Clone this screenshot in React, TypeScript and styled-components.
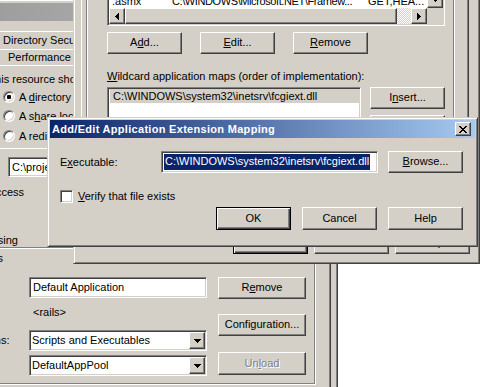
import React from "react";
import styled, { createGlobalStyle, css } from "styled-components";

const FACE = "#d4d0c8";
const SHADOW = "#808080";
const DARK = "#404040";
const SELECT = "#0a246a";

const GlobalStyle = createGlobalStyle`
  html, body { margin: 0; padding: 0; background: #ffffff; overflow: hidden; }
  body {
    font-family: "Liberation Sans", Arial, "DejaVu Sans", sans-serif;
    font-size: 11px;
    line-height: 13px;
    color: #000;
  }
  *, *::before, *::after { box-sizing: border-box; }
`;

const raisedEdge = css`
  border: 1px solid;
  border-color: #fff ${DARK} ${DARK} #fff;
  box-shadow: inset -1px -1px 0 ${SHADOW};
`;

const sunkenEdge = css`
  border: 1px solid;
  border-color: ${SHADOW} #fff #fff ${SHADOW};
  box-shadow: inset 1px 1px 0 ${DARK}, inset -1px -1px 0 ${FACE};
`;

const Desktop = styled.div`
  position: relative;
  width: 480px;
  height: 387px;
  overflow: hidden;
  background: #fff;
`;

const Window = styled.div<{ $x: number; $y: number; $w: number; $h: number; $frame: number }>`
  position: absolute;
  left: ${(p) => p.$x}px;
  top: ${(p) => p.$y}px;
  width: ${(p) => p.$w}px;
  height: ${(p) => p.$h}px;
  background: ${FACE};
  border: 1px solid;
  border-color: ${FACE} ${DARK} ${DARK} ${FACE};
  box-shadow: inset 1px 1px 0 #fff, inset -1px -1px 0 ${SHADOW};
  padding: ${(p) => p.$frame - 1}px;
  display: flex;
  flex-direction: column;
  overflow: hidden;
`;

const TitleBar = styled.div<{ $active?: boolean }>`
  flex: none;
  height: 18px;
  display: flex;
  align-items: center;
  justify-content: space-between;
  padding: 0 2px 0 2px;
  background: ${(p) =>
    p.$active
      ? `linear-gradient(to right, ${SELECT}, #a6caf0)`
      : `linear-gradient(to right, #808080, #c0c0c0)`};
  color: ${(p) => (p.$active ? "#fff" : FACE)};
  font-weight: bold;
  letter-spacing: 0.3px;
  white-space: nowrap;
`;

const CloseBox = styled.div`
  flex: none;
  width: 16px;
  height: 14px;
  margin-right: 2px;
  display: flex;
  align-items: center;
  justify-content: center;
  background: ${FACE};
  color: #000;
  ${raisedEdge}
`;

const Button = styled.button<{ $w: number; $h?: number; $default?: boolean }>`
  flex: none;
  width: ${(p) => p.$w}px;
  height: ${(p) => p.$h ?? 22}px;
  margin: 0;
  padding: 0 0 1px;
  font: inherit;
  color: #000;
  background: ${FACE};
  display: flex;
  align-items: center;
  justify-content: center;
  white-space: nowrap;
  cursor: default;
  ${(p) =>
    p.$default
      ? css`
          border: 1px solid #000;
          box-shadow: inset 1px 1px 0 #fff, inset -1px -1px 0 ${DARK}, inset -2px -2px 0 ${SHADOW};
        `
      : raisedEdge}
  &:disabled {
    color: ${SHADOW};
    text-shadow: 1px 1px 0 #fff;
  }
`;

const Field = styled.div<{ $w: number; $h?: number; $pad?: number }>`
  flex: none;
  width: ${(p) => p.$w}px;
  height: ${(p) => p.$h ?? 21}px;
  background: #fff;
  ${sunkenEdge}
  padding: 0 ${(p) => p.$pad ?? 3}px;
  display: flex;
  align-items: center;
  overflow: hidden;
  white-space: nowrap;
`;

const Selected = styled.span`
  background: ${SELECT};
  color: #fff;
  padding: 1px 1px 2px;
`;

const Combo = styled.div<{ $w: number }>`
  flex: none;
  width: ${(p) => p.$w}px;
  height: 21px;
  background: #fff;
  ${sunkenEdge}
  padding: 1px;
  display: flex;
  align-items: center;
`;

const ComboText = styled.span`
  flex: 1;
  padding-left: 1px;
  white-space: nowrap;
  overflow: hidden;
`;

const ComboButton = styled.div`
  flex: none;
  width: 16px;
  height: 17px;
  background: ${FACE};
  ${raisedEdge}
  display: flex;
  align-items: center;
  justify-content: center;
`;

const CheckBox = styled.span`
  flex: none;
  width: 13px;
  height: 13px;
  background: #fff;
  ${sunkenEdge}
`;

const Radio = styled.span<{ $checked?: boolean }>`
  flex: none;
  width: 12px;
  height: 12px;
  border-radius: 50%;
  background: #fff;
  border: 1px solid;
  border-color: ${SHADOW} #fff #fff ${SHADOW};
  box-shadow: inset 1px 1px 0 ${DARK}, inset -1px -1px 0 ${FACE};
  display: flex;
  align-items: center;
  justify-content: center;
  &::after {
    content: "";
    width: 4px;
    height: 4px;
    border-radius: 1px;
    background: ${(p) => (p.$checked ? "#000" : "transparent")};
  }
`;

/* ---------- glyphs ---------- */

const TRI: Record<string, { w: number; h: number; d: string }> = {
  down: { w: 7, h: 4, d: "M0 0h7v1h-1v1h-1v1h-1v1h-1v-1h-1v-1h-1v-1h-1z" },
  left: { w: 4, h: 7, d: "M3 0h1v7h-1v-1h-1v-1h-1v-1h-1v-1h1v-1h1v-1h1z" },
  right: { w: 4, h: 7, d: "M0 0h1v1h1v1h1v1h1v1h-1v1h-1v1h-1v1h-1z" },
};

const Tri = ({ dir }: { dir: "down" | "left" | "right" }) => {
  const t = TRI[dir];
  return (
    <svg width={t.w} height={t.h} viewBox={`0 0 ${t.w} ${t.h}`} shapeRendering="crispEdges">
      <path d={t.d} fill="#000" />
    </svg>
  );
};

const CloseGlyph = () => (
  <svg width="8" height="7" viewBox="0 0 8 7" shapeRendering="crispEdges">
    <path
      fill="#000"
      d="M0 0h2v1h-2zM6 0h2v1h-2zM1 1h2v1h-2zM5 1h2v1h-2zM2 2h4v1h-4zM3 3h2v1h-2zM2 4h4v1h-4zM1 5h2v1h-2zM5 5h2v1h-2zM0 6h2v1h-2zM6 6h2v1h-2z"
    />
  </svg>
);

/* ---------- back window (site properties) ---------- */

const TabStrip = styled.div`
  flex: none;
  margin-top: 10px;
  display: flex;
  flex-direction: column;
`;

const TabRow = styled.div<{ $h: number; $indent: number }>`
  height: ${(p) => p.$h}px;
  border-top: 1px solid #fff;
  padding-left: ${(p) => p.$indent}px;
  display: flex;
  align-items: center;
  gap: 24px;
  white-space: nowrap;
`;

const BackPage = styled.div`
  flex: none;
  width: 627px;
  height: 330px;
  border-top: 1px solid #fff;
  border-left: 1px solid #fff;
  border-right: 1px solid ${DARK};
  border-bottom: 1px solid ${DARK};
  box-shadow: inset -1px -1px 0 ${SHADOW};
  display: flex;
  flex-direction: column;
`;

const PageRow = styled.div<{ $mt: number; $h: number; $ml?: number }>`
  flex: none;
  display: flex;
  align-items: center;
  gap: 4px;
  margin-top: ${(p) => p.$mt}px;
  margin-left: ${(p) => p.$ml ?? 0}px;
  height: ${(p) => p.$h}px;
  white-space: nowrap;
`;

const EndLabel = styled.div<{ $w: number; $mt?: number; $h?: number }>`
  flex: none;
  width: ${(p) => p.$w}px;
  height: ${(p) => p.$h ?? 14}px;
  margin-top: ${(p) => p.$mt ?? 0}px;
  display: flex;
  align-items: center;
  justify-content: flex-end;
  white-space: nowrap;
`;

const WhiteRule = styled.div<{ $mt: number; $ml: number; $w: number }>`
  flex: none;
  height: 1px;
  margin-top: ${(p) => p.$mt}px;
  margin-left: ${(p) => p.$ml}px;
  width: ${(p) => p.$w}px;
  background: #fff;
`;

const SettingsGroup = styled.div`
  flex: none;
  margin-left: 185px;
  width: 425px;
  height: 137px;
  border: 1px solid ${SHADOW};
  box-shadow: 1px 1px 0 #fff, inset 1px 1px 0 #fff;
  display: flex;
  flex-direction: column;
`;

const SettingsArea = styled.div`
  flex: none;
  margin-top: 12px;
  display: flex;
`;

const FieldCol = styled.div`
  display: flex;
  flex-direction: column;
`;

const FieldRow = styled.div<{ $mt?: number; $h: number }>`
  display: grid;
  grid-template-columns: 138px 178px;
  align-items: center;
  height: ${(p) => p.$h}px;
  margin-top: ${(p) => p.$mt ?? 0}px;
`;

const FieldLabel = styled.span`
  padding-left: 14px;
  white-space: nowrap;
`;

const StaticValue = styled.span`
  padding-left: 4px;
  white-space: nowrap;
`;

const ButtonCol = styled.div`
  margin-left: 11px;
  display: flex;
  flex-direction: column;
`;

const Gap = styled.div<{ $h: number }>`
  flex: none;
  height: ${(p) => p.$h}px;
`;

/* ---------- middle window (application configuration) ---------- */

const MidSheet = styled.div`
  flex: 1;
  display: flex;
  flex-direction: column;
  margin-top: 2px;
  padding: 0 6px 6px 4px;
`;

const MidPage = styled.div`
  flex: 1;
  margin-right: 1px;
  border-top: 1px solid #fff;
  border-left: 1px solid #fff;
  border-right: 1px solid ${DARK};
  border-bottom: 1px solid ${DARK};
  box-shadow: inset -1px -1px 0 ${SHADOW};
  display: flex;
  flex-direction: column;
`;

const MapsGroup = styled.div`
  flex: 1;
  margin: 3px 14px 5px 4px;
  border: 1px solid ${SHADOW};
  box-shadow: 1px 1px 0 #fff, inset 1px 1px 0 #fff;
  padding: 1px 0 0 20px;
  display: flex;
  flex-direction: column;
`;

const ListFrame = styled.div<{ $w: number; $h: number }>`
  flex: none;
  width: ${(p) => p.$w}px;
  height: ${(p) => p.$h}px;
  background: #fff;
  ${sunkenEdge}
  padding: 1px;
`;

const ScrollGrid = styled.div`
  height: 100%;
  display: grid;
  grid-template-columns: 1fr 16px;
  grid-template-rows: 1fr 16px;
`;

const ListBody = styled.div`
  display: flex;
  flex-direction: column;
  justify-content: flex-end;
  overflow: hidden;
`;

const MapRow = styled.div`
  height: 14px;
  padding-left: 3px;
  display: grid;
  grid-template-columns: 60px 196px 1fr;
  align-items: center;
  white-space: nowrap;
  overflow: hidden;
`;

const MapCell = styled.span<{ $tight?: boolean }>`
  overflow: hidden;
  letter-spacing: ${(p) => (p.$tight ? "-0.4px" : "0")};
`;

const VScroll = styled.div`
  display: flex;
  flex-direction: column;
  justify-content: flex-end;
  background: ${FACE};
`;

const HScroll = styled.div`
  display: flex;
`;

const ScrollButton = styled.div`
  flex: none;
  width: 16px;
  height: 16px;
  background: ${FACE};
  ${raisedEdge}
  display: flex;
  align-items: center;
  justify-content: center;
`;

const Thumb = styled.div`
  flex: none;
  width: 272px;
  height: 16px;
  background: ${FACE};
  ${raisedEdge}
`;

const Track = styled.div`
  flex: 1;
  background: repeating-conic-gradient(#ffffff 0 25%, ${FACE} 0 50%) 0 0 / 2px 2px;
`;

const Corner = styled.div`
  background: ${FACE};
`;

const ButtonRow = styled.div<{ $mt: number; $gap: number; $end?: boolean }>`
  flex: none;
  display: flex;
  gap: ${(p) => p.$gap}px;
  margin-top: ${(p) => p.$mt}px;
  justify-content: ${(p) => (p.$end ? "flex-end" : "flex-start")};
`;

const GroupLabel = styled.div<{ $mt: number }>`
  flex: none;
  height: 14px;
  margin-top: ${(p) => p.$mt}px;
  display: flex;
  align-items: center;
  white-space: nowrap;
`;

const WildRow = styled.div`
  flex: none;
  display: flex;
  gap: 9px;
  margin-top: 4px;
`;

const WildList = styled.div`
  display: flex;
  flex-direction: column;
`;

const SelRow = styled.div`
  height: 14px;
  margin-left: 1px;
  padding-left: 3px;
  background: ${FACE};
  display: flex;
  align-items: center;
  white-space: nowrap;
`;

const SideButtons = styled.div`
  display: flex;
  flex-direction: column;
  gap: 6px;
`;

/* ---------- front dialog ---------- */

const DlgBody = styled.div`
  flex: 1;
  padding: 0 12px 0 10px;
  display: flex;
  flex-direction: column;
`;

const ExeRow = styled.div`
  flex: none;
  margin-top: 13px;
  height: 22px;
  display: grid;
  grid-template-columns: 101px 217px 1fr;
  align-items: center;
  & > :last-child {
    justify-self: end;
  }
`;

const CheckRow = styled.label`
  flex: none;
  margin-top: 17px;
  height: 13px;
  display: flex;
  align-items: center;
  gap: 5px;
  white-space: nowrap;
`;

export default function App() {
  return (
    <>
      <GlobalStyle />
      <Desktop>
        {/* Web site properties (behind) */}
        <Window $x={-300} $y={-1} $w={638} $h={400} $frame={4}>
          <TitleBar>
            <span>Default Web Site Properties</span>
          </TitleBar>
          <TabStrip>
            <TabRow $h={18} $indent={299}>
              <span>Directory Security</span>
              <span>HTTP Headers</span>
            </TabRow>
            <TabRow $h={16} $indent={304}>
              <span>Performance</span>
              <span>ISAPI Filters</span>
            </TabRow>
          </TabStrip>
          <BackPage>
            <PageRow $mt={6} $h={14} $ml={210}>
              The content for this resource should come from:
            </PageRow>
            <PageRow $mt={4} $h={14} $ml={298}>
              <Radio $checked />
              <span>
                A <u>d</u>irectory located on this computer
              </span>
            </PageRow>
            <PageRow $mt={5} $h={14} $ml={298}>
              <Radio />
              <span>
                A s<u>h</u>are located on another computer
              </span>
            </PageRow>
            <PageRow $mt={6} $h={14} $ml={298}>
              <Radio />
              <span>A redirection to a URL</span>
            </PageRow>
            <WhiteRule $mt={5} $ml={292} $w={120} />
            <PageRow $mt={8} $h={20} $ml={303}>
              <Field $w={250} $h={20}>
                C:\projects\rails\public
              </Field>
            </PageRow>
            <EndLabel $w={319} $mt={8}>
              Script source access
            </EndLabel>
            <EndLabel $w={313} $mt={34}>
              Directory browsing
            </EndLabel>
            <SettingsGroup>
              <EndLabel $w={112} $mt={3}>
                Application settings
              </EndLabel>
              <SettingsArea>
                <FieldCol>
                  <FieldRow $h={21}>
                    <FieldLabel>Application na<u>m</u>e:</FieldLabel>
                    <Field $w={178}>Default Application</Field>
                  </FieldRow>
                  <FieldRow $mt={7} $h={14}>
                    <FieldLabel>Starting point:</FieldLabel>
                    <StaticValue>&lt;rails&gt;</StaticValue>
                  </FieldRow>
                  <FieldRow $mt={11} $h={21}>
                    <FieldLabel>Execute permissions:</FieldLabel>
                    <Combo $w={178}>
                      <ComboText>Scripts and Executables</ComboText>
                      <ComboButton>
                        <Tri dir="down" />
                      </ComboButton>
                    </Combo>
                  </FieldRow>
                  <FieldRow $mt={4} $h={21}>
                    <FieldLabel>Application pool:</FieldLabel>
                    <Combo $w={178}>
                      <ComboText>DefaultAppPool</ComboText>
                      <ComboButton>
                        <Tri dir="down" />
                      </ComboButton>
                    </Combo>
                  </FieldRow>
                </FieldCol>
                <ButtonCol>
                  <Button $w={88}>
                    R<u>e</u>move
                  </Button>
                  <Gap $h={15} />
                  <Button $w={88}>Configuration...</Button>
                  <Gap $h={16} />
                  <Button $w={88} $h={23} disabled>
                    Un<u>l</u>oad
                  </Button>
                </ButtonCol>
              </SettingsArea>
            </SettingsGroup>
          </BackPage>
        </Window>

        {/* Application configuration (middle) */}
        <Window $x={73} $y={-40} $w={407} $h={304} $frame={4}>
          <TitleBar>
            <span>Application Configuration</span>
          </TitleBar>
          <MidSheet>
            <MidPage>
              <MapsGroup>
                <ListFrame $w={338} $h={36}>
                  <ScrollGrid>
                    <ListBody>
                      <MapRow>
                        <MapCell>.asmx</MapCell>
                        <MapCell $tight>C:\WINDOWS\Microsoft.NET\Framew...</MapCell>
                        <MapCell>GET,HEA...</MapCell>
                      </MapRow>
                    </ListBody>
                    <VScroll>
                      <ScrollButton>
                        <Tri dir="down" />
                      </ScrollButton>
                    </VScroll>
                    <HScroll>
                      <ScrollButton>
                        <Tri dir="left" />
                      </ScrollButton>
                      <Thumb />
                      <Track />
                      <ScrollButton>
                        <Tri dir="right" />
                      </ScrollButton>
                    </HScroll>
                    <Corner />
                  </ScrollGrid>
                </ListFrame>
                <ButtonRow $mt={6} $gap={18}>
                  <Button $w={75}>
                    A<u>d</u>d...
                  </Button>
                  <Button $w={75}>
                    <u>E</u>dit...
                  </Button>
                  <Button $w={75}>
                    <u>R</u>emove
                  </Button>
                </ButtonRow>
                <GroupLabel $mt={15}>
                  <span>
                    <u>W</u>ildcard application maps (order of implementation):
                  </span>
                </GroupLabel>
                <WildRow>
                  <ListFrame $w={254} $h={130}>
                    <WildList>
                      <SelRow>C:\WINDOWS\system32\inetsrv\fcgiext.dll</SelRow>
                    </WildList>
                  </ListFrame>
                  <SideButtons>
                    <Button $w={75}>
                      I<u>n</u>sert...
                    </Button>
                    <Button $w={75}>Edit...</Button>
                  </SideButtons>
                </WildRow>
              </MapsGroup>
            </MidPage>
            <ButtonRow $mt={6} $gap={6} $end>
              <Button $w={75} $default>
                OK
              </Button>
              <Button $w={75}>Cancel</Button>
              <Button $w={75}>Help</Button>
            </ButtonRow>
          </MidSheet>
        </Window>

        {/* Add/Edit Application Extension Mapping (front) */}
        <Window $x={47} $y={117} $w={431} $h={130} $frame={3}>
          <TitleBar $active>
            <span>Add/Edit Application Extension Mapping</span>
            <CloseBox>
              <CloseGlyph />
            </CloseBox>
          </TitleBar>
          <DlgBody>
            <ExeRow>
              <span>
                E<u>x</u>ecutable:
              </span>
              <Field $w={217} $h={22} $pad={2}>
                <Selected>C:\WINDOWS\system32\inetsrv\fcgiext.dll</Selected>
              </Field>
              <Button $w={75}>
                <u>B</u>rowse...
              </Button>
            </ExeRow>
            <CheckRow>
              <CheckBox />
              <span>
                <u>V</u>erify that file exists
              </span>
            </CheckRow>
            <ButtonRow $mt={4} $gap={11} $end>
              <Button $w={75} $h={23} $default>
                OK
              </Button>
              <Button $w={75} $h={23}>
                Cancel
              </Button>
              <Button $w={75} $h={23}>
                Help
              </Button>
            </ButtonRow>
          </DlgBody>
        </Window>
      </Desktop>
    </>
  );
}
